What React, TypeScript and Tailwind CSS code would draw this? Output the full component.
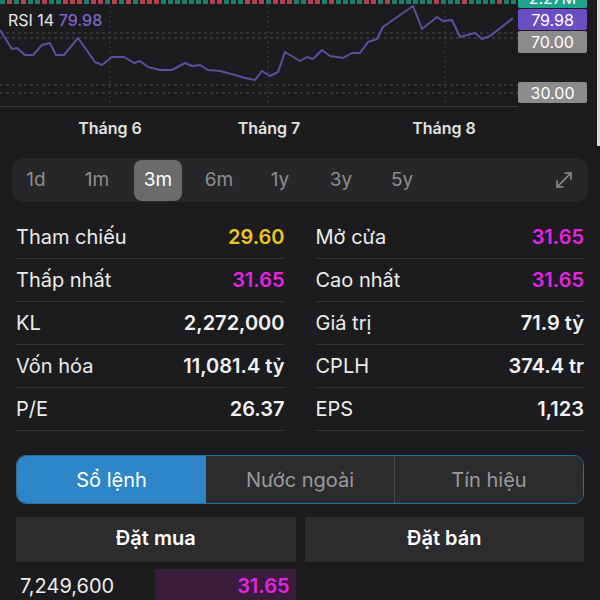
import { MoveDiagonal } from 'lucide-react';

const rsi: [number, number][] = [
    [0, 30], [12, 49], [17, 48], [25, 55], [33, 55], [42, 45], [50, 43], [56, 55], [64, 55],
    [78, 38], [95, 62], [102, 65], [112, 57], [124, 57], [134, 63], [140, 61], [148, 67],
    [160, 70], [172, 70], [185, 63], [192, 66], [200, 65], [208, 70], [220, 71], [235, 75],
    [245, 78], [255, 80], [262, 71], [270, 76], [278, 72], [285, 52], [300, 61], [307, 57],
    [313, 59], [322, 50], [330, 56], [343, 58], [352, 53], [360, 53], [368, 42], [377, 39],
    [383, 27], [400, 15], [413, 6], [422, 29], [437, 17], [443, 21], [452, 20], [460, 37],
    [475, 33], [482, 39], [490, 36], [503, 26], [513, 18],
];

// candle strip along the top edge
const candles = Array.from({ length: 74 }, (_, i) => {
    const v = Math.sin(i * 12.9898) * 43758.5453;
    return v - Math.floor(v) > 0.5 ? '#b3404f' : '#1f7d6c';
});

const ranges = ['1d', '1m', '3m', '6m', '1y', '3y', '5y'];

const stats: [string, string, string, string, string, string][] = [
    ['Tham chiếu', '29.60', 'text-[#eac51d]', 'Mở cửa', '31.65', 'text-[#e622e4]'],
    ['Thấp nhất', '31.65', 'text-[#e622e4]', 'Cao nhất', '31.65', 'text-[#e622e4]'],
    ['KL', '2,272,000', 'text-[#f2f2f2]', 'Giá trị', '71.9 tỷ', 'text-[#f2f2f2]'],
    ['Vốn hóa', '11,081.4 tỷ', 'text-[#f2f2f2]', 'CPLH', '374.4 tr', 'text-[#f2f2f2]'],
    ['P/E', '26.37', 'text-[#f2f2f2]', 'EPS', '1,123', 'text-[#f2f2f2]'],
];

function Chart() {
    const pts = rsi.map(([x, y]) => `${x},${y}`).join(' ');
    return (
        <div className="relative h-[107px] w-[597px] overflow-hidden">
            <svg width="597" height="107" className="block">
                {candles.map((c, i) => (
                    <rect key={i} x={i * 7} y={0} width={5} height={4} fill={c} />
                ))}
                {[33, 38, 85, 93].map((y) => (
                    <line key={y} x1={0} x2={518} y1={y} y2={y} stroke="#4a4a4c" strokeDasharray="3 3" />
                ))}
                {[110, 268, 445].map((x) => (
                    <line key={x} x1={x} x2={x} y1={6} y2={106} stroke="#3e3e40" strokeDasharray="2 3" />
                ))}
                <line x1={0} x2={518} y1={106.5} y2={106.5} stroke="#3a3a3c" />
                <polyline points={pts} fill="none" stroke="#5b4fa3" strokeWidth={2} strokeLinejoin="round" />
            </svg>
            <div className="absolute left-[8px] top-[9px] text-[16px] leading-[22px] text-[#e8e8e8]">
                RSI 14 <span className="font-medium text-[#7a66cf]">79.98</span>
            </div>
            <div className="absolute left-[518px] top-[-13px] flex h-[21px] w-[69px] items-center justify-center rounded-[2px] bg-[#1da38b] text-[16px] text-white">
                2.27M
            </div>
            <div className="absolute left-[518px] top-[9px] flex h-[21px] w-[69px] items-center justify-center rounded-[2px] bg-[#6a4ec4] text-[16px] text-white">
                79.98
            </div>
            <div className="absolute left-[518px] top-[31px] flex h-[22px] w-[69px] items-center justify-center rounded-[2px] bg-[#8c8c8e] text-[16px] text-white">
                70.00
            </div>
            <div className="absolute left-[518px] top-[82px] flex h-[21px] w-[69px] items-center justify-center rounded-[2px] bg-[#8c8c8e] text-[16px] text-white">
                30.00
            </div>
        </div>
    );
}

export default function App() {
    return (
        <div className="h-[600px] w-[600px] overflow-hidden bg-[#1c1c1e] font-['Inter',sans-serif]">
            {/* chart + month axis */}
            <div className="flex h-[146px]">
                <div className="w-[597px]">
                    <Chart />
                    <div className="relative h-[39px] text-[16px] font-semibold text-[#e2e2e2]">
                        <span className="absolute left-[110px] top-[9px] -translate-x-1/2">Tháng 6</span>
                        <span className="absolute left-[269px] top-[9px] -translate-x-1/2">Tháng 7</span>
                        <span className="absolute left-[444px] top-[9px] -translate-x-1/2">Tháng 8</span>
                    </div>
                </div>
                <div className="w-[3px] bg-[#dcdcdc]" />
            </div>

            {/* range picker */}
            <div className="mx-3 mt-[12px] flex h-[44px] items-center gap-[13px] rounded-xl bg-[#272729] pr-3">
                {ranges.map((r) => (
                    <div
                        key={r}
                        className={
                            r === '3m'
                                ? 'flex h-[41px] w-[48px] items-center justify-center rounded-lg bg-[#6b6b6d] text-[19px] text-white'
                                : 'flex h-[41px] w-[48px] items-center justify-center text-[19px] text-[#8e8e92]'
                        }
                    >
                        {r}
                    </div>
                ))}
                <MoveDiagonal className="ml-auto text-[#8e8e92]" size={24} strokeWidth={1.6} />
            </div>

            {/* stats */}
            <div className="mx-4 mt-[14px] grid grid-cols-2 gap-x-[31px]">
                {stats.map(([l1, v1, c1, l2, v2, c2]) => (
                    <div key={l1} className="contents">
                        <div className="flex h-[43px] items-center justify-between border-b border-[#333335] text-[20px]">
                            <span className="text-[#ececec]">{l1}</span>
                            <span className={'font-semibold ' + c1}>{v1}</span>
                        </div>
                        <div className="flex h-[43px] items-center justify-between border-b border-[#333335] text-[20px]">
                            <span className="text-[#ececec]">{l2}</span>
                            <span className={'font-semibold ' + c2}>{v2}</span>
                        </div>
                    </div>
                ))}
            </div>

            {/* tabs */}
            <div className="mx-4 mt-[24px] flex h-[49px] overflow-hidden rounded-[10px] border border-[#2f6d9c] text-[20px]">
                <div className="flex w-[189px] items-center justify-center bg-[#2e86c6] text-white">Sổ lệnh</div>
                <div className="flex flex-1 items-center justify-center border-r border-[#474749] bg-[#2c2c2e] text-[#9a9a9c]">
                    Nước ngoài
                </div>
                <div className="flex flex-1 items-center justify-center bg-[#2c2c2e] text-[#9a9a9c]">Tín hiệu</div>
            </div>

            {/* order book */}
            <div className="mx-4 mt-[13px] grid grid-cols-2 gap-x-[9px]">
                <div className="flex h-[45px] items-center justify-center bg-[#2c2c2e] pb-[4px] text-[20px] font-semibold text-white">
                    Đặt mua
                </div>
                <div className="flex h-[45px] items-center justify-center bg-[#2c2c2e] pb-[4px] text-[20px] font-semibold text-white">
                    Đặt bán
                </div>
                <div className="mt-[7px] flex h-[34px] items-center">
                    <span className="w-[139px] pl-1 text-[20px] text-[#ececec]">7,249,600</span>
                    <span className="flex h-full flex-1 items-center justify-end bg-[#3a1d3b] pr-[6px] text-[20px] font-semibold text-[#e622e4]">
                        31.65
                    </span>
                </div>
            </div>
        </div>
    );
}
